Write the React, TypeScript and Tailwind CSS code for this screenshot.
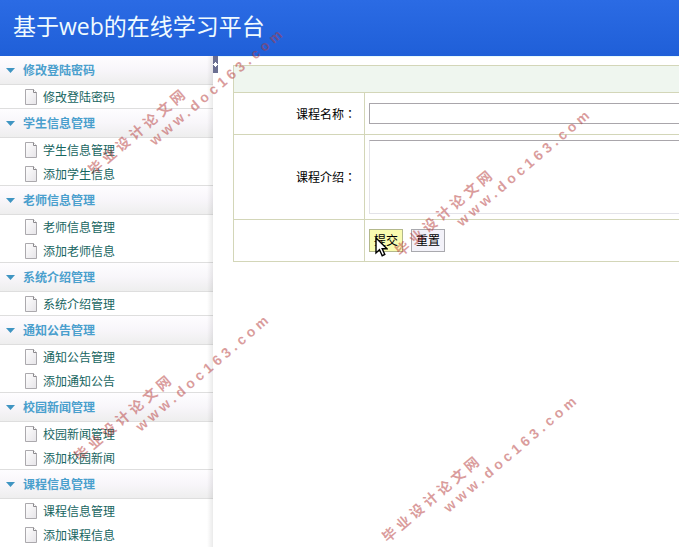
import { useState } from "react";

interface MenuGroup {
  title: string;
  items: string[];
}

const menu: MenuGroup[] = [
  { title: "修改登陆密码", items: ["修改登陆密码"] },
  { title: "学生信息管理", items: ["学生信息管理", "添加学生信息"] },
  { title: "老师信息管理", items: ["老师信息管理", "添加老师信息"] },
  { title: "系统介绍管理", items: ["系统介绍管理"] },
  { title: "通知公告管理", items: ["通知公告管理", "添加通知公告"] },
  { title: "校园新闻管理", items: ["校园新闻管理", "添加校园新闻"] },
  { title: "课程信息管理", items: ["课程信息管理", "添加课程信息"] },
];

function PageIcon() {
  return (
    <svg width="13" height="17" viewBox="0 0 13 17" className="shrink-0">
      <defs>
        <linearGradient id="sheet" x1="0" y1="0" x2="1" y2="1">
          <stop offset="0" stopColor="#ffffff" />
          <stop offset="1" stopColor="#e6e4e8" />
        </linearGradient>
      </defs>
      <path d="M0.5 0.5H8.5L11.5 3.5V15.5H0.5Z" fill="url(#sheet)" stroke="#aba9ad" />
      <path d="M8.5 0.5V3.5H11.5" fill="#fff" stroke="#8b898d" />
    </svg>
  );
}

function SideGroup({ group }: { group: MenuGroup }) {
  const [open, setOpen] = useState(true);

  return (
    <section className="group">
      <button
        type="button"
        onClick={() => setOpen(!open)}
        className="flex h-[29px] w-full items-center gap-2 border-b border-[#dedede] bg-linear-to-b from-[#fefdff] via-[#f8f6fa] to-[#eeeeee] pl-[6px] text-left font-bold text-[#4a9fcd]"
      >
        <svg width="9" height="5" viewBox="0 0 9 5" className={open ? "" : "-rotate-90"}>
          <path d="M0 0H9L4.5 5Z" fill="#3f95c2" />
        </svg>
        {group.title}
      </button>
      {open && (
        <ul className="border-[#dedede] group-last:border-transparent">
          {group.items.map((item) => (
            <li key={item} className="h-6 border-inherit last:border-b">
              <a href="#" className="flex h-6 items-center gap-[5px] pl-[25px] text-[#17655f]">
                <PageIcon />
                {item}
              </a>
            </li>
          ))}
        </ul>
      )}
    </section>
  );
}

function FieldLabel({ htmlFor, text }: { htmlFor: string; text: string }) {
  return (
    <label htmlFor={htmlFor}>
      {text}
      <span className="font-['Noto_Sans_CJK_TC',sans-serif]" lang="zh-TW">：</span>
    </label>
  );
}

function Watermark({ className }: { className: string }) {
  return (
    <div
      aria-hidden="true"
      className={`pointer-events-none absolute z-10 origin-top-left -rotate-[40.5deg] font-['Liberation_Sans','Noto_Sans_CJK_SC',sans-serif] text-sm leading-[17px] font-bold tracking-[4px] whitespace-nowrap text-[#b53a3a]/50 ${className}`}
    >
      <p>毕业设计论文网</p>
      <p className="pl-[66px]">www.doc163.com</p>
    </div>
  );
}

export default function App() {
  return (
    <div className="relative flex min-h-screen flex-col overflow-hidden bg-white font-['Noto_Sans_CJK_SC',sans-serif] text-xs text-black">
      <header className="flex h-14 items-center bg-linear-to-b from-[#2b6be4] to-[#1f5fd8] pb-1 pl-[13px]">
        <h1 className="font-['Open_Sans','Noto_Sans_CJK_SC',sans-serif] text-[23px] text-[#f0fbff]">
          基于web的在线学习平台
        </h1>
      </header>

      <div className="flex flex-1">
        <nav className="relative w-[213px] shrink-0 self-start">
          {/* soft edge */}
          <div className="pointer-events-none absolute inset-y-0 right-0 w-[6px] bg-linear-to-r from-transparent to-black/8" />
          {menu.map((group) => (
            <SideGroup key={group.title} group={group} />
          ))}
        </nav>

        <button type="button" aria-label="收起菜单" className="flex h-[17px] w-[5px] shrink-0 items-center bg-[#6b6f91]">
          <svg width="5" height="5" viewBox="0 0 5 5">
            <path d="M2 0H3V1H4V2H5V3H4V4H3V5H2V4H1V3H0V2H1V1H2Z" fill="#fff" />
          </svg>
        </button>

        {/* Course form */}
        <main className="min-w-0 flex-1 overflow-hidden border-t border-[#e6fafd] pt-2 pl-[15px]">
          <form onSubmit={(e) => e.preventDefault()}>
            <table className="w-full min-w-[600px] table-fixed border-collapse [&_td]:border [&_td]:border-[#d3d6b8] [&_th]:border [&_th]:border-[#d3d6b8]">
              <colgroup>
                <col className="w-[131px]" />
                <col />
              </colgroup>
              <tbody>
                <tr className="h-[27px] bg-[#eff6ef]">
                  <td colSpan={2} />
                </tr>
                <tr className="h-[42px]">
                  <th className="pr-2 text-right font-normal">
                    <FieldLabel htmlFor="course-name" text="课程名称" />
                  </th>
                  <td className="px-1">
                    <input id="course-name" type="text" className="block h-[21px] w-full border border-[#a9a6ab] px-1" />
                  </td>
                </tr>
                <tr className="h-[85px]">
                  <th className="pr-2 text-right font-normal">
                    <FieldLabel htmlFor="course-intro" text="课程介绍" />
                  </th>
                  <td className="px-1">
                    <textarea
                      id="course-intro"
                      className="block h-[74px] w-full resize-none border border-[#e3e3e9] border-t-[#a9a6ab] px-1"
                    />
                  </td>
                </tr>
                <tr className="h-[42px]">
                  <td />
                  <td className="px-1">
                    <div className="flex gap-2">
                      <button type="submit" className="h-[23px] w-[34px] border border-[#b3b88c] bg-[#f9fbb0] pb-[2px]">
                        提交
                      </button>
                      <button type="reset" className="h-[23px] w-[34px] border border-[#a9a9ae] bg-[#f3f2f9] pb-[2px]">
                        重置
                      </button>
                    </div>
                  </td>
                </tr>
              </tbody>
            </table>
          </form>
        </main>
      </div>

      <Watermark className="top-[166px] left-[85px]" />
      <Watermark className="top-[247px] left-[392px]" />
      <Watermark className="top-[452px] left-[71px]" />
      <Watermark className="top-[533px] left-[379px]" />

      {/* Mouse pointer */}
      <svg width="13" height="20" viewBox="0 0 13 20" className="pointer-events-none absolute top-[237px] left-[375px] z-20">
        <path d="M1 1V16L4.5 12.7L7.2 18.7L9.8 17.5L7.2 11.7H12Z" fill="#fff" stroke="#000" strokeWidth="1.4" />
      </svg>
    </div>
  );
}
